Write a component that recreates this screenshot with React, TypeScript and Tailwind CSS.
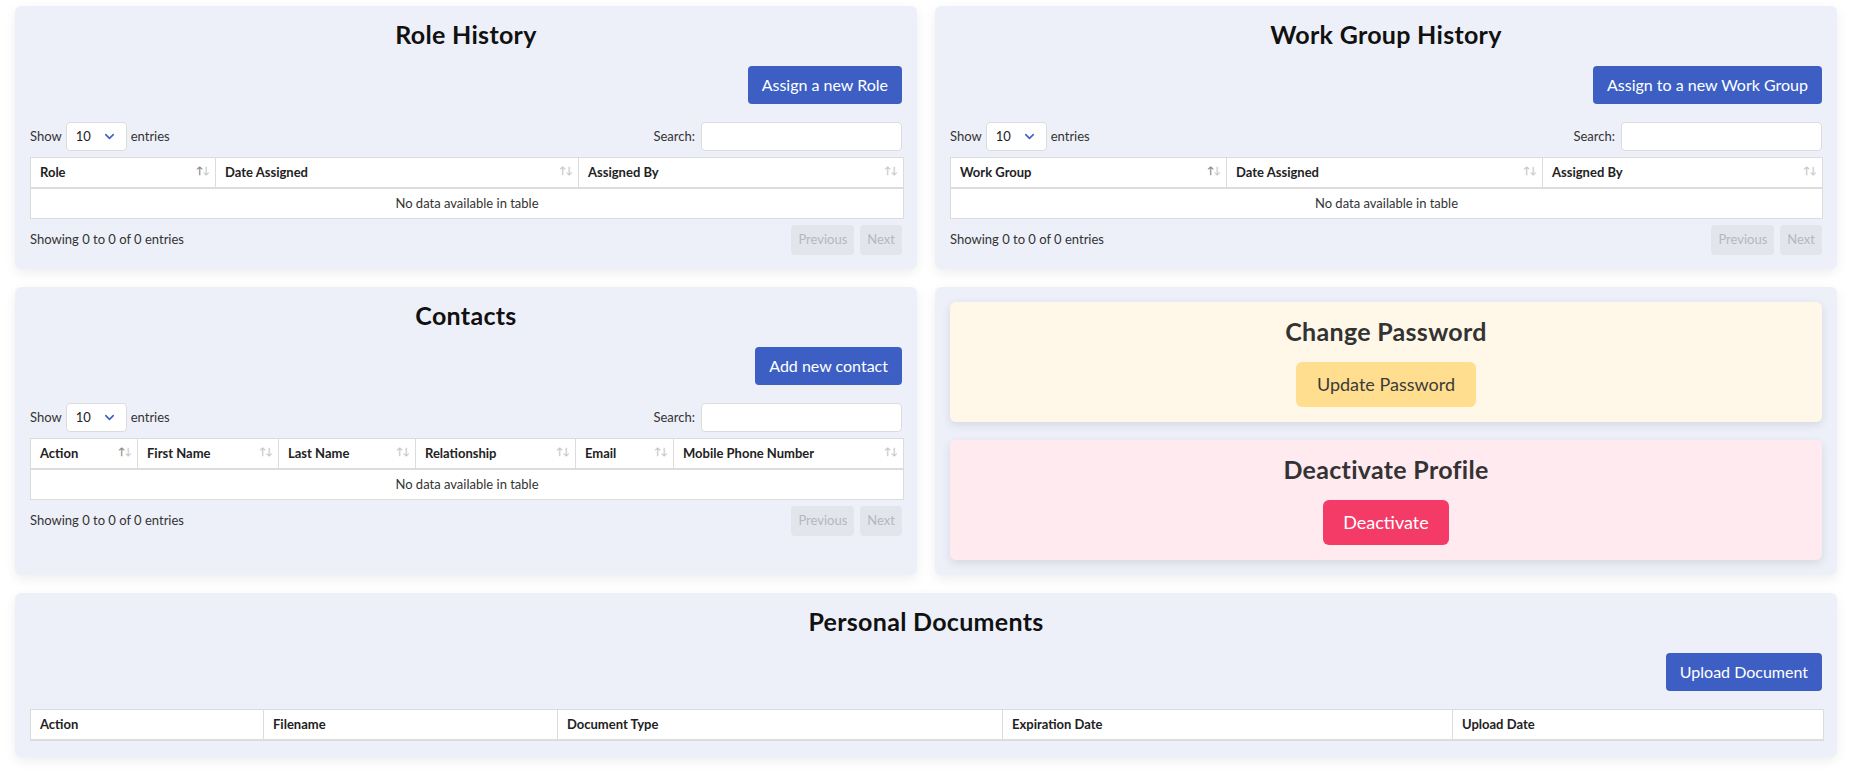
import { ChevronDown } from "lucide-react";

type Column = { label: string; width: string };

const SortIcon = ({ active }: { active?: boolean }) => (
  <span className="absolute right-[6px] top-[7px] text-[10px] leading-none tracking-[-1px]">
    <span className={active ? "text-[#8a8a8a]" : "text-[#c8c8c8]"}>↑</span>
    <span className="text-[#c8c8c8]">↓</span>
  </span>
);

const ActionButton = ({ label }: { label: string }) => (
  <div className="mt-[17px] flex justify-end">
    <button className="h-[38px] rounded-[4px] bg-[#3d5fc4] px-[14px] text-[16px] text-white">
      {label}
    </button>
  </div>
);

const CardTitle = ({ children }: { children: string }) => (
  <h2 className="text-center text-[25px] font-bold leading-[29px] tracking-[0.3px] text-[#111]">
    {children}
  </h2>
);

const DataTable = ({
  columns,
  sortable = true,
  controls = true,
}: {
  columns: Column[];
  sortable?: boolean;
  controls?: boolean;
}) => (
  <>
    {controls && (
      <div className="mt-[18px] flex h-[29px] items-center justify-between text-[13px] text-[#333]">
        <div className="flex items-center gap-[4px]">
          <span>Show</span>
          <div className="flex h-[29px] w-[61px] items-center justify-between rounded-[4px] border border-[#dcdcdc] bg-white pl-[9px] pr-[9px] text-[13px] text-[#222]">
            <span>10</span>
            <ChevronDown size={15} strokeWidth={2.5} className="text-[#3d5fc4]" />
          </div>
          <span>entries</span>
        </div>
        <div className="flex items-center gap-[6px]">
          <span>Search:</span>
          <input className="h-[29px] w-[201px] rounded-[4px] border border-[#dcdcdc] bg-white outline-none" />
        </div>
      </div>
    )}
    <table
      className={`w-full table-fixed border-collapse border border-[#dcdcdc] bg-white text-[13px] ${
        controls ? "mt-[6px]" : "mt-[18px]"
      }`}
    >
      <thead>
        <tr>
          {columns.map((c, i) => (
            <th
              key={c.label}
              className={`relative h-[30px] border-b-2 border-r border-[#dcdcdc] px-[9px] text-left font-bold text-[#222] ${c.width}`}
            >
              {c.label}
              {sortable && <SortIcon active={i === 0} />}
            </th>
          ))}
        </tr>
      </thead>
      {controls && (
        <tbody>
          <tr>
            <td
              colSpan={columns.length}
              className="h-[31px] text-center text-[13px] text-[#333]"
            >
              No data available in table
            </td>
          </tr>
        </tbody>
      )}
    </table>
    {controls && (
      <div className="mt-[6px] flex items-center justify-between text-[13px]">
        <span className="text-[#333]">Showing 0 to 0 of 0 entries</span>
        <div className="flex gap-[6px]">
          <button className="h-[30px] rounded-[4px] bg-[#e3e5ec] px-[7px] text-[#b5b7bf]">
            Previous
          </button>
          <button className="h-[30px] rounded-[4px] bg-[#e3e5ec] px-[7px] text-[#b5b7bf]">
            Next
          </button>
        </div>
      </div>
    )}
  </>
);

const Card = ({ children }: { children: React.ReactNode }) => (
  <section className="rounded-md bg-[#eef0f9] px-[15px] pb-[14px] pt-[14px] shadow-[0_4px_12px_rgba(0,0,0,0.07)]">
    {children}
  </section>
);

const App = () => {
  return (
    <div className="min-h-screen bg-white pb-[20px] pl-[15px] pr-[18px] pt-[6px] font-['Lato',sans-serif]">
      <div className="grid grid-cols-2 gap-x-[18px] gap-y-[18px]">
        <Card>
          <CardTitle>Role History</CardTitle>
          <ActionButton label="Assign a new Role" />
          <DataTable
            columns={[
              { label: "Role", width: "w-[185px]" },
              { label: "Date Assigned", width: "w-[363px]" },
              { label: "Assigned By", width: "w-[325px]" },
            ]}
          />
        </Card>
        <Card>
          <CardTitle>Work Group History</CardTitle>
          <ActionButton label="Assign to a new Work Group" />
          <DataTable
            columns={[
              { label: "Work Group", width: "w-[276px]" },
              { label: "Date Assigned", width: "w-[316px]" },
              { label: "Assigned By", width: "w-[280px]" },
            ]}
          />
        </Card>
        <Card>
          <CardTitle>Contacts</CardTitle>
          <ActionButton label="Add new contact" />
          <DataTable
            columns={[
              { label: "Action", width: "w-[107px]" },
              { label: "First Name", width: "w-[141px]" },
              { label: "Last Name", width: "w-[137px]" },
              { label: "Relationship", width: "w-[160px]" },
              { label: "Email", width: "w-[98px]" },
              { label: "Mobile Phone Number", width: "w-[230px]" },
            ]}
          />
        </Card>
        <section className="flex flex-col gap-[18px] rounded-md bg-[#eef0f9] p-[15px] shadow-[0_4px_12px_rgba(0,0,0,0.07)]">
          <div className="rounded-md bg-[#fff8e9] py-[15px] text-center shadow-[0_3px_10px_rgba(0,0,0,0.1)]">
            <h3 className="text-[25px] font-bold leading-[29px] tracking-[0.3px] text-[#333]">
              Change Password
            </h3>
            <button className="mt-[16px] h-[45px] w-[180px] rounded-md bg-[#ffde8f] text-[18px] text-[#3b3b3b]">
              Update Password
            </button>
          </div>
          <div className="rounded-md bg-[#ffeaef] py-[15px] text-center shadow-[0_3px_10px_rgba(0,0,0,0.1)]">
            <h3 className="text-[25px] font-bold leading-[29px] tracking-[0.3px] text-[#333]">
              Deactivate Profile
            </h3>
            <button className="mt-[16px] h-[45px] w-[126px] rounded-md bg-[#f43b68] text-[18px] text-white">
              Deactivate
            </button>
          </div>
        </section>
        <div className="col-span-2">
          <section className="rounded-md bg-[#eef0f9] px-[15px] pb-[16px] pt-[14px] shadow-[0_4px_12px_rgba(0,0,0,0.07)]">
            <CardTitle>Personal Documents</CardTitle>
            <ActionButton label="Upload Document" />
            <DataTable
              sortable={false}
              controls={false}
              columns={[
                { label: "Action", width: "w-[233px]" },
                { label: "Filename", width: "w-[294px]" },
                { label: "Document Type", width: "w-[445px]" },
                { label: "Expiration Date", width: "w-[450px]" },
                { label: "Upload Date", width: "w-[371px]" },
              ]}
            />
          </section>
        </div>
      </div>
    </div>
  );
};

export default App;
